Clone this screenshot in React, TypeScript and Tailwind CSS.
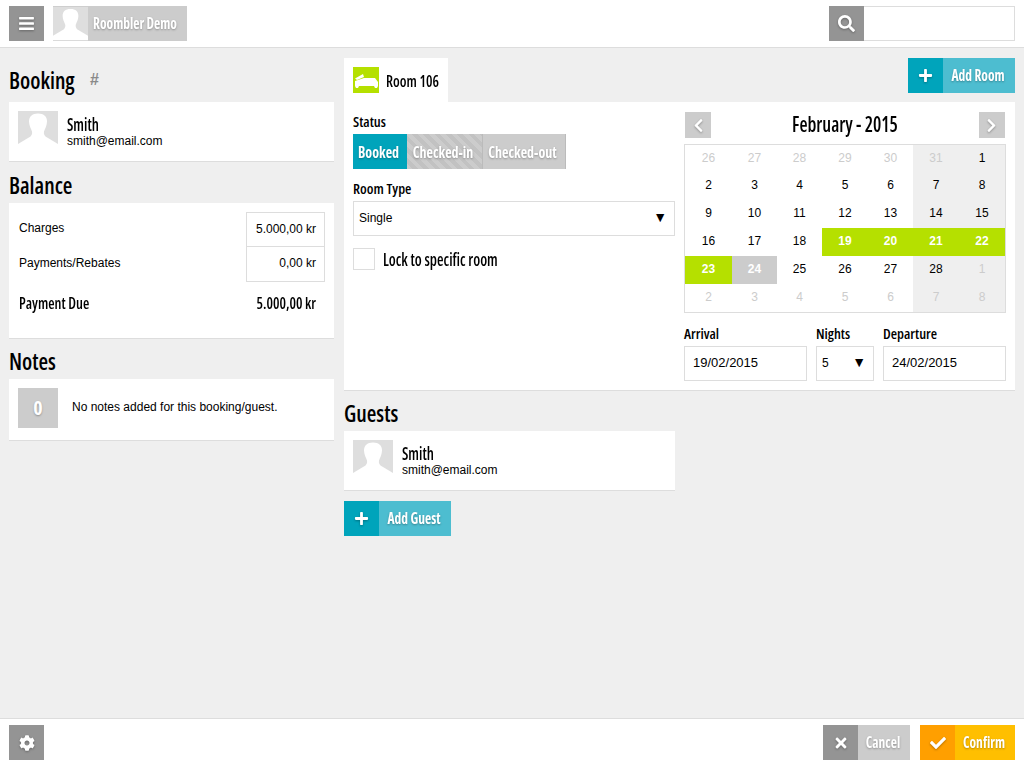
import React from "react";
import { FaBars, FaSearch, FaPlus, FaTimes, FaCheck, FaCog, FaChevronLeft, FaChevronRight } from "react-icons/fa";

const narrow = "font-['Open_Sans',sans-serif] [font-stretch:75%] whitespace-nowrap";
const btnText = `${narrow} font-bold text-[13.500px] text-white [text-shadow:0_1px_2px_rgba(0,0,0,0.3)]`;
const iconCls = "text-white drop-shadow-[0_1px_1px_rgba(0,0,0,0.3)]";

function Silhouette({ className }: { className: string }) {
  return (
    <svg viewBox="0 0 40 38" className={className}>
      <rect width="40" height="38" fill="#dedede" />
      <path d="M20 2.500c-6 0-9 3-9 8 0 4 2 7 3 10 .5 2-.5 4-1.500 5L0 33v5h40v-5l-12.500-7.500c-1-1-2-3-1.500-5 1-3 3-6 3-10 0-5-3-8-9-8z" fill="#fff" />
    </svg>
  );
}

function Tall({ children }: { children: React.ReactNode }) {
  return <span className="inline-block scale-y-[1.15]">{children}</span>;
}

function Heading({ children }: { children: React.ReactNode }) {
  return <h2 className={`${narrow} text-[22px] leading-[26px] font-semibold text-black scale-y-110 origin-left -translate-y-[2px]`}>{children}</h2>;
}

function Label({ children }: { children: React.ReactNode }) {
  return <div className={`${narrow} text-[14.500px] leading-[15px] font-semibold text-black`}>{children}</div>;
}

function Plus() {
  return <FaPlus className={`w-[15px] h-[15px] ${iconCls}`} />;
}

function Guest() {
  return (
    <div className="flex items-start bg-white border-b border-[#dddddd] h-[60px] pl-[9px] pt-[9px]">
      <Silhouette className="w-[40px] h-[38px] shrink-0" />
      <div className="ml-[9px] pt-[3px]">
        <div className={`${narrow} text-[15px] leading-[20px] font-semibold text-black`}><Tall>Smith</Tall></div>
        <div className="text-[12px] leading-[14px] text-black">smith@email.com</div>
      </div>
    </div>
  );
}

function IconButton({ icon, text, dark, light, widthClass }: { icon: React.ReactNode; text: string; dark: string; light: string; widthClass: string }) {
  return (
    <div className={`flex h-[35px] ${widthClass}`}>
      <div className={`w-[35px] flex items-center justify-center ${dark}`}>{icon}</div>
      <div className={`flex-1 flex items-center justify-center pr-[2px] ${btnText} ${light}`}><Tall>{text}</Tall></div>
    </div>
  );
}

const rows: [string, string][][] = [
  [["26","m"],["27","m"],["28","m"],["29","m"],["30","m"],["31","mw"],["1","w"]],
  [["2",""],["3",""],["4",""],["5",""],["6",""],["7","w"],["8","w"]],
  [["9",""],["10",""],["11",""],["12",""],["13",""],["14","w"],["15","w"]],
  [["16",""],["17",""],["18",""],["19","s"],["20","s"],["21","s"],["22","s"]],
  [["23","s"],["24","e"],["25",""],["26",""],["27",""],["28","w"],["1","mw"]],
  [["2","m"],["3","m"],["4","m"],["5","m"],["6","m"],["7","mw"],["8","mw"]],
];

const cellCls: Record<string, string> = {
  "": "text-black",
  m: "text-[#cccccc]",
  w: "text-black bg-[#efefef]",
  mw: "text-[#cccccc] bg-[#efefef]",
  s: "text-white font-bold bg-[#b5e000]",
  e: "text-white font-bold bg-[#cccccc]",
};

export default function App() {
  return (
    <div className="w-[1024px] h-[768px] flex flex-col bg-[#efefef] overflow-hidden font-['Liberation_Sans',Arial,sans-serif]">
      <header className="h-[48px] shrink-0 bg-white border-b border-[#dddddd] flex items-start justify-between pt-[6px] px-[9px]">
        <div className="flex">
          <div className="w-[35px] h-[35px] bg-[#949494] flex items-center justify-center">
            <FaBars className={`w-[17px] h-[17px] ${iconCls}`} />
          </div>
          <div className="flex ml-[9px] h-[35px] w-[134px] bg-[#cccccc]">
            <Silhouette className="w-[35px] h-[35px]" />
            <div className={`flex-1 flex items-center justify-center pr-[5px] ${btnText}`}><Tall>Roombler Demo</Tall></div>
          </div>
        </div>
        <div className="flex">
          <div className="w-[35px] h-[35px] bg-[#949494] flex items-center justify-center">
            <FaSearch className={`w-[17px] h-[17px] ${iconCls}`} />
          </div>
          <div className="w-[151px] h-[35px] bg-white border border-l-0 border-[#dddddd]" />
        </div>
      </header>

      <main className="flex-1 flex gap-[10px] px-[9px]">
        <section className="w-[325px] shrink-0 pt-[20px]">
          <div className="flex items-center h-[26px] mb-[8px]">
            <Heading>Booking</Heading>
            <span className="ml-[15px] -translate-y-[1px] text-[#8a8a8a] text-[16px] italic font-bold">#</span>
          </div>
          <Guest />
          <div className="mt-[11px] mb-[4px]"><Heading>Balance</Heading></div>
          <div className="bg-white border-b border-[#dddddd] h-[136px] pt-[9px] pl-[10px] pr-[9px]">
            <div className="flex items-stretch h-[35px]">
              <div className="flex-1 text-[12px] leading-[14px] pt-[9px] text-black">Charges</div>
              <div className="w-[79px] border border-[#dddddd] flex items-center justify-end pr-[8px] pb-[2px] text-[12px] text-black">5.000,00 kr</div>
            </div>
            <div className="flex items-stretch h-[35px]">
              <div className="flex-1 text-[12px] leading-[14px] pt-[9px] text-black">Payments/Rebates</div>
              <div className="w-[79px] border border-t-0 border-[#dddddd] flex items-center justify-end pr-[8px] pb-[2px] text-[12px] text-black">0,00 kr</div>
            </div>
            <div className="flex items-center justify-between pr-[9px] mt-[10px]">
              <div className={`${narrow} text-[14.500px] font-semibold text-black`}><Tall>Payment Due</Tall></div>
              <div className={`${narrow} text-[14.500px] font-semibold text-black`}><Tall>5.000,00 kr</Tall></div>
            </div>
          </div>
          <div className="mt-[10px] mb-[4px]"><Heading>Notes</Heading></div>
          <div className="flex items-start bg-white border-b border-[#dddddd] h-[62px] pl-[9px] pt-[9px]">
            <div className={`w-[40px] h-[40px] bg-[#cccccc] flex items-center justify-center ${narrow} font-bold text-[20px] text-white [text-shadow:0_1px_2px_rgba(0,0,0,0.3)]`}>0</div>
            <div className="ml-[14px] mt-[12px] text-[12px] leading-[14px] text-black">No notes added for this booking/guest.</div>
          </div>
        </section>

        <section className="w-[671px] shrink-0 pt-[10px]">
          <div className="flex items-start justify-between h-[44px]">
            <div className="w-[104px] h-[44px] bg-white flex items-start pl-[9px] pt-[9px]">
              <div className="w-[26px] h-[26px] bg-[#b5e000]">
                <svg viewBox="0 0 26 26" className="w-[26px] h-[26px]"><path fill="#fff" d="M2 11.500 10 7l1 3-7 3zM2 14l9-3h11l3 4v4l-1 2h-2l-1-2H6l-1 2H3l-1-2z" /></svg>
              </div>
              <div className={`ml-[7px] ${narrow} text-[14.500px] leading-[28px] font-semibold text-black`}><Tall>Room 106</Tall></div>
            </div>
            <IconButton icon={<Plus />} text="Add Room" dark="bg-[#00a4bb]" light="bg-[#4dbdd0]" widthClass="w-[107px]" />
          </div>

          <div className="bg-white border-b border-[#dddddd] h-[289px] flex gap-[9px] px-[9px]">
            <div className="w-[322px]">
              <div className="mt-[12px] mb-[5px]"><Label>Status</Label></div>
              <div className={`flex h-[35px] w-[213px] ${btnText} text-[14px]`}>
                <div className="w-[54px] flex items-center justify-center pr-[3px] bg-[#00a4bb]"><Tall>Booked</Tall></div>
                <div className="w-[76px] flex items-center justify-center pr-[3px] border-r border-[#bbbbbb] bg-[repeating-linear-gradient(45deg,#cccccc_0,#cccccc_4px,#c2c2c2_4px,#c2c2c2_8px)]"><Tall>Checked-in</Tall></div>
                <div className="flex-1 flex items-center justify-center pr-[3px] border-r border-[#bbbbbb] bg-[#cccccc]"><Tall>Checked-out</Tall></div>
              </div>
              <div className="mt-[12px] mb-[5px]"><Label>Room Type</Label></div>
              <div className="h-[35px] border border-[#dddddd] flex items-center justify-between pl-[5px] pr-[7px] pb-[2px] text-[12px] text-black">
                <span>Single</span><span className="text-[14px]">▼</span>
              </div>
              <div className="flex items-center mt-[11px]">
                <div className="w-[22px] h-[22px] border border-[#dddddd]" />
                <div className={`ml-[8px] pt-[1px] ${narrow} text-[15px] font-semibold text-black`}><Tall>Lock to specific room</Tall></div>
              </div>
            </div>

            <div className="w-[322px] pt-[10px]">
              <div className="flex items-center justify-between h-[26px] pl-[1px] pr-[1px]">
                <div className="w-[26px] h-[26px] bg-[#cccccc] flex items-center justify-center">
                  <FaChevronLeft className={`w-[15px] h-[15px] ${iconCls}`} />
                </div>
                <div className={`${narrow} text-[18.500px] font-semibold text-black -translate-y-[1px]`}><Tall>February - 2015</Tall></div>
                <div className="w-[26px] h-[26px] bg-[#cccccc] flex items-center justify-center">
                  <FaChevronRight className={`w-[15px] h-[15px] ${iconCls}`} />
                </div>
              </div>
              <div className="mt-[6px] border border-[#dddddd] h-[169px] grid grid-cols-[47px_45px_45px_46px_45px_46px_46px] grid-rows-[27px_repeat(5,28px)] text-[12px]">
                {rows.flat().map(([d, k], i) => (
                  <div key={i} className={`flex items-center justify-center pb-[2px] ${cellCls[k]}`}>{d}</div>
                ))}
              </div>
              <div className="flex gap-[9px] mt-[13px]">
                <div className="w-[123px]">
                  <div className="mb-[5px]"><Label>Arrival</Label></div>
                  <div className="h-[35px] border border-[#dddddd] flex items-center pl-[8px] pb-[2px] text-[13px] text-black">19/02/2015</div>
                </div>
                <div className="w-[58px]">
                  <div className="mb-[5px]"><Label>Nights</Label></div>
                  <div className="h-[35px] border border-[#dddddd] flex items-center justify-between pl-[5px] pr-[7px] pb-[2px] text-[12px] text-black"><span>5</span><span className="text-[14px]">▼</span></div>
                </div>
                <div className="w-[123px]">
                  <div className="mb-[5px]"><Label>Departure</Label></div>
                  <div className="h-[35px] border border-[#dddddd] flex items-center pl-[8px] pb-[2px] text-[13px] text-black">24/02/2015</div>
                </div>
              </div>
            </div>
          </div>

          <div className="mt-[10px] mb-[4px]"><Heading>Guests</Heading></div>
          <div className="w-[331px]"><Guest /></div>
          <div className="mt-[10px]">
            <IconButton icon={<Plus />} text="Add Guest" dark="bg-[#00a4bb]" light="bg-[#4dbdd0]" widthClass="w-[107px]" />
          </div>
        </section>
      </main>

      <footer className="h-[50px] shrink-0 bg-white border-t border-[#dddddd] flex items-start justify-between pt-[6px] px-[9px]">
        <div className="w-[35px] h-[35px] bg-[#949494] flex items-center justify-center">
          <FaCog className={`w-[16px] h-[16px] ${iconCls}`} />
        </div>
        <div className="flex gap-[10px]">
          <IconButton
            icon={<FaTimes className={`w-[16px] h-[16px] ${iconCls}`} />}
            text="Cancel" dark="bg-[#949494]" light="bg-[#cccccc]" widthClass="w-[87px]" />
          <IconButton
            icon={<FaCheck className={`w-[16px] h-[16px] ${iconCls}`} />}
            text="Confirm" dark="bg-[#ff9f00]" light="bg-[#ffbf00]" widthClass="w-[95px]" />
        </div>
      </footer>
    </div>
  );
}
